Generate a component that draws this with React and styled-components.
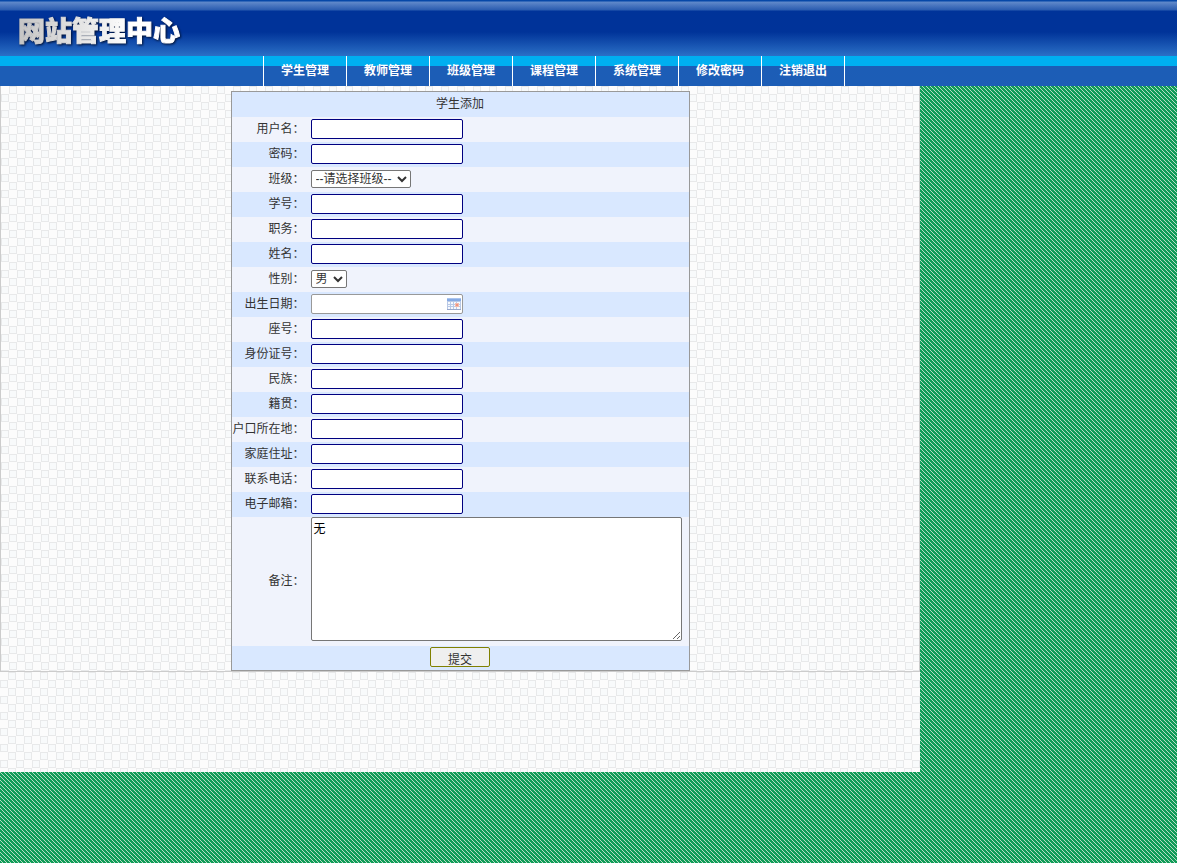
import { useId } from 'react';
import styled, { createGlobalStyle } from 'styled-components';

const svgUrl = (svg) => `url("data:image/svg+xml,${encodeURIComponent(svg)}")`;

const stripes = svgUrl(
    `<svg xmlns="http://www.w3.org/2000/svg" width="4" height="4" shape-rendering="crispEdges">
        <rect width="4" height="4" fill="#109c58"/>
        <path d="M0 0h1v1H0zM1 1h1v1H1zM2 2h1v1H2zM3 3h1v1H3z" fill="#b5dcc4"/>
    </svg>`
);

const checks = svgUrl(
    `<svg xmlns="http://www.w3.org/2000/svg" width="16" height="16" shape-rendering="crispEdges">
        <rect width="16" height="16" fill="#fcfcfc"/>
        <path d="M8.5 .5h7v7h-7zM.5 8.5h7v7h-7z" fill="#f8fafb" stroke="#e8e9ea"/>
    </svg>`
);

const GlobalStyle = createGlobalStyle`
    body {
        margin: 0;
        color: #333;
        background: #109c58 ${stripes};
        font: 12px/20px "Liberation Sans", "Noto Sans CJK SC", sans-serif;
    }
`;

const Header = styled.header`
    display: flex;
    align-items: center;
    height: 56px;
    padding: 8px 18px 0;
    box-sizing: border-box;
    background: linear-gradient(
        #0648a8 0,
        #0648a8 1px,
        #6089ca 2px,
        #2a5cb0 10px,
        #003399 11px,
        #003399 32px,
        #2b70c6 56px
    );
`;

const Title = styled.h1`
    margin: 0;
    color: transparent;
    background: linear-gradient(90deg, #c4c4c4, #fff 70%);
    background-clip: text;
    -webkit-text-stroke: 1px transparent;
    filter: drop-shadow(1px 1px 1px #001030);
    font-size: 27px;
    font-weight: 900;
    line-height: 32px;
`;

const Nav = styled.nav`
    display: flex;
    justify-content: center;
    height: 30px;
    padding-right: 69px;
    background: linear-gradient(#00aff0 10px, #1c5db6 10px);
`;

const NavLink = styled.a`
    width: 82px;
    border-right: 1px solid #fff;
    color: #fff;
    font-weight: bold;
    line-height: 30px;
    text-align: center;
    text-decoration: none;

    &:first-child {
        border-left: 1px solid #fff;
    }
`;

const Page = styled.div`
    max-width: 920px;
    padding-bottom: 100px;
    background: ${checks} 0 10px;
`;

const Content = styled.main`
    padding-top: 5px;
    border: solid #ccc;
    border-width: 0 1px 1px;
    background: ${checks};
`;

const FormTable = styled.table`
    width: 50%;
    margin: 0 auto;
    border: 1px solid #999;
    border-spacing: 0;

    td,
    th {
        height: 23px;
        padding: 0 0 2px;
        font-weight: normal;
    }

    tr:nth-child(odd) {
        background: #d9e8ff;
    }

    tr:nth-child(even) {
        background: #f0f3fc;
    }
`;

const LabelCell = styled.th`
    width: 73px;
    text-align: right;
    white-space: nowrap;
`;

const FieldCell = styled.td`
    && {
        padding-left: 6px;
    }
`;

const FooterCell = styled.td`
    && {
        height: 22px;
    }
`;

const TextInput = styled.input`
    display: block;
    width: 152px;
    height: 20px;
    padding: 1px 2px;
    box-sizing: border-box;
    border: 1px solid #000080;
    border-radius: 2px;
    background: #fff;
    font: inherit;
`;

const DateField = styled.div`
    position: relative;
    width: 152px;

    input {
        border-color: #999;
    }

    svg {
        position: absolute;
        top: 3px;
        right: 2px;
    }
`;

const Select = styled.select`
    display: block;
    width: ${({ $width }) => $width};
    height: 18px;
    padding: 0;
    border: 1px solid #767676;
    border-radius: 2px;
    color: #333;
    background: #fff;
    font: inherit;
    line-height: 16px;
`;

const TextArea = styled.textarea`
    display: block;
    width: 371px;
    height: 124px;
    margin-bottom: 3px;
    padding: 1px 2px;
    box-sizing: border-box;
    border: 1px solid #767676;
    border-radius: 2px;
    color: #000;
    font: inherit;
`;

const SubmitButton = styled.button`
    display: block;
    width: 60px;
    height: 20px;
    margin: 0 auto;
    padding: 4px 0 0;
    border: 1px solid #808000;
    border-radius: 2px;
    color: #333;
    background: #efefef;
    font: inherit;
    line-height: 16px;
`;

const CalendarIcon = () => (
    <svg
        width="14"
        height="13"
        viewBox="0 0 14 13"
        shapeRendering="crispEdges"
        aria-hidden="true"
    >
        <path d="M0 1h14v12H0z" fill="#b9c9e6" />
        <path d="M0 1h14v1H0z" fill="#a9c4ee" />
        <path d="M0 2h14v2H0z" fill="#86aae4" />
        <path
            d="M1 5h2v2H1zM4 5h2v2H4zM7 5h2v2H7zM10 5h3v2h-3zM1 8h2v1H1zM4 8h2v1H4zM7 8h2v1H7zM10 8h3v1h-3zM1 10h2v2H1zM4 10h2v2H4zM7 10h2v2H7zM10 10h3v2h-3z"
            fill="#f6f9ff"
        />
        <path d="M8 6h4v4H8z" fill="#f4bcae" />
        <path d="M9 7h2v2H9z" fill="#ee9480" />
        <path d="M0 12h14v1H0z" fill="#98a8cc" />
    </svg>
);

const navItems = [
    '学生管理',
    '教师管理',
    '班级管理',
    '课程管理',
    '系统管理',
    '修改密码',
    '注销退出'
];

const fields = [
    { label: '用户名' },
    { label: '密码', type: 'password' },
    { label: '班级', options: ['--请选择班级--'], width: '100px' },
    { label: '学号' },
    { label: '职务' },
    { label: '姓名' },
    { label: '性别', options: ['男', '女'], width: '36px' },
    { label: '出生日期', type: 'date' },
    { label: '座号' },
    { label: '身份证号' },
    { label: '民族' },
    { label: '籍贯' },
    { label: '户口所在地' },
    { label: '家庭住址' },
    { label: '联系电话' },
    { label: '电子邮箱' },
    { label: '备注', type: 'textarea' }
];

const Field = ({ id, type, options, width }) => {
    if (options) {
        return (
            <Select id={id} $width={width}>
                {options.map((option) => (
                    <option key={option}>{option}</option>
                ))}
            </Select>
        );
    }
    if (type === 'textarea') {
        return <TextArea id={id} defaultValue="无" />;
    }
    if (type === 'date') {
        return (
            <DateField>
                <TextInput id={id} type="text" />
                <CalendarIcon />
            </DateField>
        );
    }
    return <TextInput id={id} type={type || 'text'} />;
};

const FieldRow = ({ label, ...props }) => {
    const id = useId();
    return (
        <tr>
            <LabelCell scope="row">
                <label htmlFor={id}>{label}：</label>
            </LabelCell>
            <FieldCell>
                <Field id={id} {...props} />
            </FieldCell>
        </tr>
    );
};

const App = () => (
    <>
        <GlobalStyle />
        <Header>
            <Title>网站管理中心</Title>
        </Header>
        <Nav>
            {navItems.map((item) => (
                <NavLink key={item} href="#">
                    {item}
                </NavLink>
            ))}
        </Nav>
        <Page>
            <Content lang="zh-CN">
                <form onSubmit={(e) => e.preventDefault()}>
                    <FormTable>
                        <tbody>
                            <tr>
                                <th colSpan={2}>学生添加</th>
                            </tr>
                            {fields.map((field) => (
                                <FieldRow key={field.label} {...field} />
                            ))}
                            <tr>
                                <FooterCell colSpan={2}>
                                    <SubmitButton type="submit">
                                        提交
                                    </SubmitButton>
                                </FooterCell>
                            </tr>
                        </tbody>
                    </FormTable>
                </form>
            </Content>
        </Page>
    </>
);

export default App;
